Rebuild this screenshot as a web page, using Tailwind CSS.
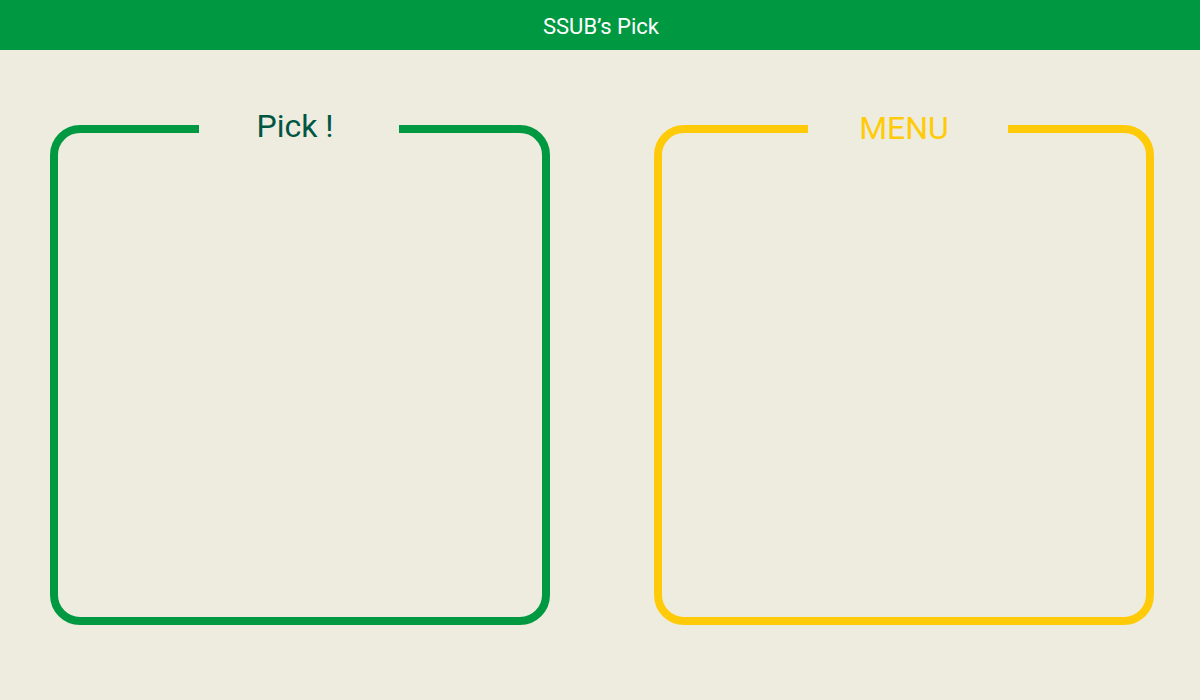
<!DOCTYPE html>
<html lang="en">
<head>
<meta charset="utf-8">
<meta name="viewport" content="width=device-width, initial-scale=1">
<title>SSUB’s Pick</title>
<script src="https://cdn.jsdelivr.net/npm/@tailwindcss/browser@4"></script>
</head>
<body class="min-h-screen bg-[#eeecdf] font-['Roboto','Noto_Sans_CJK_KR',sans-serif]">
<header class="flex h-[50px] items-center justify-center bg-[#009942] pt-1 pl-0.5 text-white">
<h1 class="text-[22px] leading-7">SSUB’s Pick</h1>
</header>
<main class="grid grid-cols-2 gap-[104px] pt-[75px] pr-[46px] pb-[75px] pl-[50px]">
<section class="relative min-h-[500px] rounded-[30px] border-8 border-[#009942]">
<h2 class="absolute -top-[31px] left-[141px] flex h-12 w-[200px] items-center justify-center bg-[#eeecdf] pr-2 text-[32px] leading-10 text-[#005643]">Pick !</h2>
</section>
<section class="relative min-h-[500px] rounded-[30px] border-8 border-[#ffcb08]">
<h2 class="absolute -top-[31px] left-[146px] flex h-12 w-[200px] items-center justify-center bg-[#eeecdf] pt-1 pr-2 text-[32px] leading-10 text-[#ffcb08]">MENU</h2>
</section>
</main>
</body>
</html>
